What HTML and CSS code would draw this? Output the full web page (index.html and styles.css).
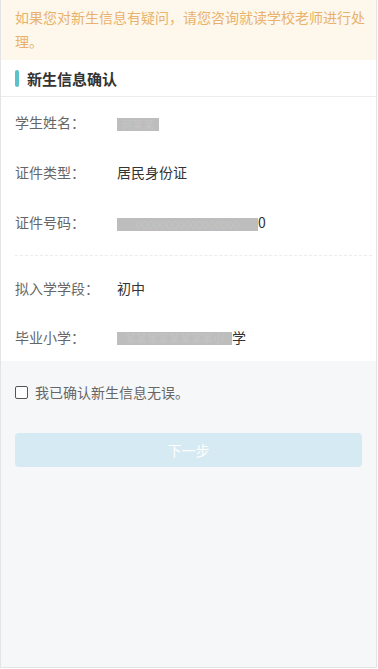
FILE: index.html
```html
<!DOCTYPE html>
<html lang="zh">
<head>
<meta charset="utf-8">
<link rel="stylesheet" href="styles.css">
</head>
<body>
<div class="page">
  <div class="notice">如果您对新生信息有疑问，请您咨询就读学校老师进行处理。</div>
  <div class="card">
    <div class="title"><span class="bar"></span>新生信息确认</div>
    <div class="group first">
      <div class="row"><span class="label">学生姓名：</span><span class="value"><span class="mask name">何某某</span></span></div>
      <div class="row"><span class="label">证件类型：</span><span class="value">居民身份证</span></div>
      <div class="row"><span class="label">证件号码：</span><span class="value"><span class="mask idno">00000000000000000</span>0</span></div>
    </div>
    <div class="group second">
      <div class="row"><span class="label">拟入学学段：</span><span class="value">初中</span></div>
      <div class="row"><span class="label">毕业小学：</span><span class="value"><span class="mask school">某某某某某某某某小</span>学</span></div>
    </div>
  </div>
  <label class="confirm"><span class="box"></span>我已确认新生信息无误。</label>
  <div class="btn">下一步</div>
</div>
</body>
</html>
```

FILE: styles.css
```css
html, body {
  margin: 0;
  padding: 0;
  background: #fff;
}
body {
  font-family: "Noto Sans CJK SC", "Noto Sans", sans-serif;
  font-size: 14px;
}
.page {
  box-sizing: border-box;
  width: 377px;
  height: 668px;
  border: 1px solid #e4e4e4;
  border-top: none;
  background: #f6f7f9;
}
.notice {
  background: #fdf7ec;
  color: #e9b26c;
  padding: 5px 6px 7px 14px;
  line-height: 24px;
  font-size: 14px;
}
.card {
  background: #fff;
}
.title {
  display: flex;
  align-items: center;
  height: 36px;
  padding-left: 14px;
  font-size: 15px;
  font-weight: bold;
  color: #333;
  border-bottom: 1px solid #ececec;
}
.bar {
  width: 4px;
  height: 17px;
  border-radius: 2px;
  background: #5bc2cc;
  margin-right: 8px;
}
.group {
  margin: 0 4px 0 14px;
}
.group.first {
  padding-bottom: 8px;
}
.group.second {
  border-top: 1px dashed #ececec;
  padding-top: 7px;
}
.row {
  display: flex;
  align-items: center;
  height: 50px;
  line-height: 20px;
}
.group.second .row {
  height: 49px;
}
.label {
  width: 102px;
  color: #666;
}
.value {
  color: #333;
}
.mask {
  background: #bdbdbd;
  color: #c4c4c4;
  display: inline-block;
  height: 13px;
  line-height: 13px;
  vertical-align: middle;
  font-size: 11px;
  text-align: center;
}
.mask.name { width: 42px; }
.mask.idno { width: 141px; }
.mask.school { width: 115px; }
.confirm {
  display: flex;
  align-items: center;
  padding: 21px 14px 0;
  color: #666;
  line-height: 20px;
}
.box {
  box-sizing: border-box;
  width: 13px;
  height: 13px;
  border: 1px solid #555;
  border-radius: 2px;
  background: #fff;
  margin-right: 7px;
}
.btn {
  margin: 31px 14px 0;
  height: 34px;
  line-height: 34px;
  border-radius: 4px;
  background: #d5eaf2;
  color: #fff;
  text-align: center;
  font-size: 14px;
}
```
